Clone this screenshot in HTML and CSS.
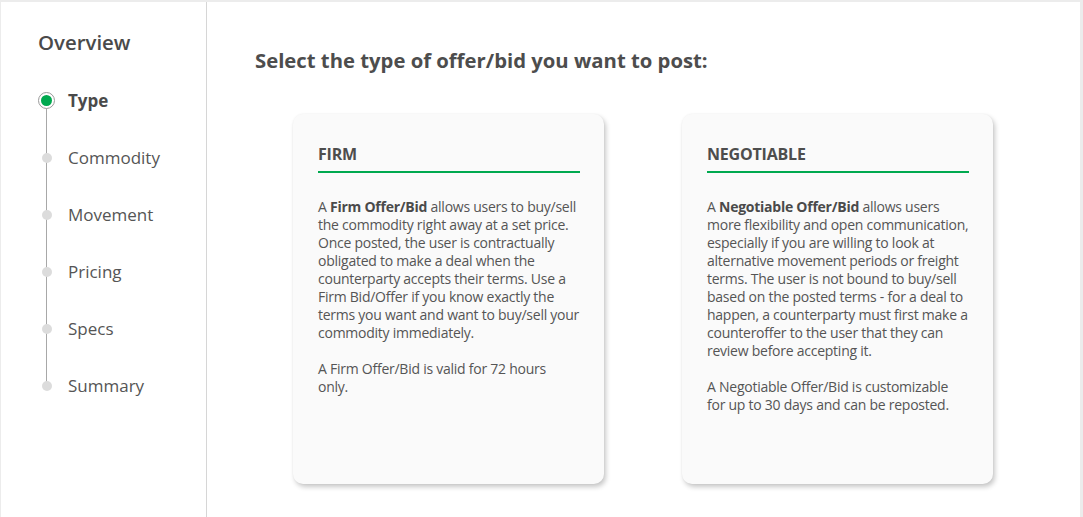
FILE: index.html
```html
<!DOCTYPE html>
<html>
<head>
<meta charset="utf-8">
<link rel="stylesheet" href="styles.css">
</head>
<body>
<div class="page">
  <aside class="sidebar">
    <div class="sidebar-title">Overview</div>
    <ul class="steps">
      <li class="step active"><span class="dot"></span><span class="label">Type</span></li>
      <li class="step"><span class="dot"></span><span class="label">Commodity</span></li>
      <li class="step"><span class="dot"></span><span class="label">Movement</span></li>
      <li class="step"><span class="dot"></span><span class="label">Pricing</span></li>
      <li class="step"><span class="dot"></span><span class="label">Specs</span></li>
      <li class="step"><span class="dot"></span><span class="label">Summary</span></li>
    </ul>
  </aside>
  <main class="main">
    <h1 class="heading">Select the type of offer/bid you want to post:</h1>
    <div class="cards">
      <section class="card">
        <h2 class="card-title">FIRM</h2>
        <p class="card-text">A <b>Firm Offer/Bid</b> allows users to buy/sell the commodity right away at a set price. Once posted, the user is contractually obligated to make a deal when the counterparty accepts their terms. Use a Firm Bid/Offer if you know exactly the terms you want and want to buy/sell your commodity immediately.</p>
        <p class="card-text">A Firm Offer/Bid is valid for 72 hours<br>only.</p>
      </section>
      <section class="card">
        <h2 class="card-title">NEGOTIABLE</h2>
        <p class="card-text">A <b>Negotiable Offer/Bid</b> allows users more flexibility and open communication, especially if you are willing to look at alternative movement periods or freight terms. The user is not bound to buy/sell based on the posted terms - for a deal to happen, a counterparty must first make a counteroffer to the user that they can review before accepting it.</p>
        <p class="card-text">A Negotiable Offer/Bid is customizable for up to 30 days and can be reposted.</p>
      </section>
    </div>
  </main>
  <div class="scroll-edge"></div>
</div>
</body>
</html>
```
FILE: styles.css
```css
* { box-sizing: border-box; }
html, body { margin: 0; padding: 0; }
body {
  font-family: "Open Sans", "Noto Sans", sans-serif;
  color: #555;
  background: #fff;
}
.page {
  display: flex;
  height: 517px;
  border-top: 2px solid #ececec;
  border-left: 1px solid #ececec;
}
.sidebar {
  width: 206px;
  flex: none;
  border-right: 1px solid #d6d6d6;
  padding: 28px 0 0 37px;
}
.sidebar-title {
  font-size: 20.4px;
  line-height: 24px;
  font-weight: 600;
  color: #4a4a4a;
}
.steps {
  list-style: none;
  margin: 18px 0 0 0;
  padding: 0;
  position: relative;
}
.steps::before {
  content: "";
  position: absolute;
  left: 8px;
  top: 36px;
  bottom: 28px;
  width: 1px;
  background: #a8a8a8;
}
.step {
  height: 57px;
  display: flex;
  align-items: center;
  gap: 13px;
  position: relative;
}
.dot {
  width: 17px;
  height: 17px;
  flex: none;
  display: flex;
  align-items: center;
  justify-content: center;
}
.dot::after {
  content: "";
  width: 10px;
  height: 10px;
  border-radius: 50%;
  background: #dcdcdc;
}
.step.active .dot {
  border: 1px solid #9a9a9a;
  border-radius: 50%;
  background: #fff;
}
.step.active .dot::after {
  background: #00a94f;
  width: 11px;
  height: 11px;
}
.label {
  font-size: 17px;
  color: #555;
}
.step.active .label {
  font-weight: 700;
  color: #4a4a4a;
}
.main {
  flex: 1;
  padding: 46px 0 0 48px;
}
.heading {
  margin: 0;
  font-size: 20.3px;
  line-height: 24px;
  font-weight: 700;
  color: #4d4d4d;
}
.cards {
  display: flex;
  gap: 78px;
  margin: 42px 0 0 38px;
}
.card {
  width: 311px;
  height: 370px;
  background: #fafafa;
  border-radius: 10px;
  box-shadow: 2px 3px 5px rgba(0,0,0,0.22), 0 0 2px rgba(0,0,0,0.05);
  padding: 30px 24px 0 25px;
}
.card-title {
  margin: 0;
  font-size: 16px;
  line-height: 20px;
  font-weight: 700;
  color: #4d4d4d;
  padding-bottom: 7px;
  border-bottom: 2px solid #00a94f;
  letter-spacing: -0.2px;
}
.card-text {
  margin: 25px 0 18px 0;
  font-size: 14px;
  line-height: 18px;
  color: #555;
  letter-spacing: -0.25px;
}
.card-text + .card-text { margin-top: 0; }
.card-text b { color: #4a4a4a; }
.scroll-edge {
  width: 3px;
  flex: none;
  background: #ececec;
}
```
